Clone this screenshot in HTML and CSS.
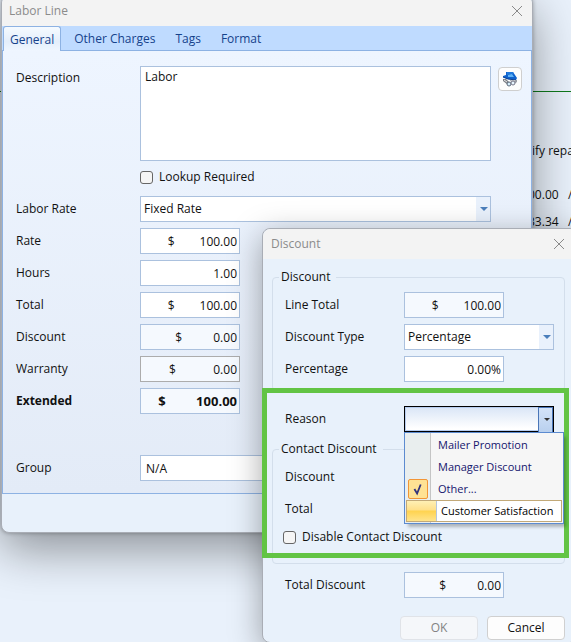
FILE: index.html
```html
<!DOCTYPE html>
<html lang="en">
<head>
    <meta charset="UTF-8">
    <meta name="viewport" content="width=device-width, initial-scale=1.0">
    <title>Labor Line</title>
    <link rel="stylesheet" href="styles.css">
</head>
<body>
    <main class="desktop">
        <section class="estimate">
            <p class="estimate-note">ify repa</p>
            <p class="estimate-amount">00.00 &nbsp; /</p>
            <p class="estimate-amount">33.34 &nbsp; /</p>
        </section>

        <section class="window labor-window">
            <header class="titlebar">
                <h1>Labor Line</h1>
                <button class="close" type="button" aria-label="Close">
                    <svg width="12" height="12" viewBox="0 0 12 12"><path d="M1 1L11 11M11 1L1 11"/></svg>
                </button>
            </header>
            <nav class="tabs">
                <a href="#" class="tab active">General</a>
                <a href="#" class="tab">Other Charges</a>
                <a href="#" class="tab">Tags</a>
                <a href="#" class="tab">Format</a>
            </nav>
            <form class="panel">
                <div class="row row-top">
                    <label for="description">Description</label>
                    <textarea id="description" class="field">Labor</textarea>
                    <button class="lookup" type="button" aria-label="Look up">
                        <svg width="16" height="16" viewBox="0 0 16 16">
                            <path d="M4 1L11 1L15 7L14 9L5 8L1 6L1 5L4 4Z" fill="#0f62cc"/>
                            <path d="M5 1L11 1L12 3L5 4Z" fill="#1f78dc"/>
                            <path d="M6 4L10 3L12 6L6 6Z" fill="#5fb2f5"/>
                            <path d="M1 6L6 8L14 9" stroke="#0b3f91" fill="none"/>
                            <path d="M1 8L4 8L8 12L6 14L1 10Z" fill="#7b7f86"/>
                            <path d="M8 9L15 9L15 11L12 13L9 11Z" fill="#9a9ea6"/>
                            <path d="M2 9L5 11M9 10L13 10" stroke="#e8e8e8"/>
                            <circle cx="7" cy="13" r="2" fill="#d5edfa" stroke="#5d6b7c"/>
                            <circle cx="11" cy="12" r="2" fill="#e7f6ff" stroke="#778"/>
                        </svg>
                    </button>
                </div>
                <div class="row row-check">
                    <label class="check"><input type="checkbox"> Lookup Required</label>
                </div>
                <div class="row">
                    <label for="labor-rate">Labor Rate</label>
                    <div class="select">
                        <select id="labor-rate" class="field"><option>Fixed Rate</option></select>
                    </div>
                </div>
                <div class="row">
                    <label for="rate">Rate</label>
                    <input id="rate" class="field amount" value="$&nbsp;&nbsp;&nbsp;&nbsp;&nbsp;&nbsp;&nbsp;&nbsp;100.00">
                </div>
                <div class="row">
                    <label for="hours">Hours</label>
                    <input id="hours" class="field amount" value="1.00">
                </div>
                <div class="row">
                    <label for="total">Total</label>
                    <input id="total" class="field amount" value="$&nbsp;&nbsp;&nbsp;&nbsp;&nbsp;&nbsp;&nbsp;&nbsp;100.00">
                </div>
                <div class="row">
                    <label for="discount">Discount</label>
                    <input id="discount" class="field amount" readonly value="$&nbsp;&nbsp;&nbsp;&nbsp;&nbsp;&nbsp;&nbsp;&nbsp;&nbsp;&nbsp;0.00">
                </div>
                <div class="row">
                    <label for="warranty">Warranty</label>
                    <input id="warranty" class="field amount muted" readonly value="$&nbsp;&nbsp;&nbsp;&nbsp;&nbsp;&nbsp;&nbsp;&nbsp;&nbsp;&nbsp;&nbsp;&nbsp;0.00">
                </div>
                <div class="row strong">
                    <label for="extended">Extended</label>
                    <input id="extended" class="field amount" readonly value="$&nbsp;&nbsp;&nbsp;&nbsp;&nbsp;&nbsp;&nbsp;&nbsp;&nbsp;100.00">
                </div>
                <div class="row row-group">
                    <label for="group">Group</label>
                    <input id="group" class="field" value="N/A">
                </div>
            </form>
            <footer class="statusbar"></footer>
        </section>

        <section class="window discount-window">
            <header class="titlebar">
                <h2>Discount</h2>
                <button class="close" type="button" aria-label="Close">
                    <svg width="12" height="12" viewBox="0 0 12 12"><path d="M1 1L11 11M11 1L1 11"/></svg>
                </button>
            </header>
            <form class="dialog">
                <fieldset class="first">
                    <legend>Discount</legend>
                    <div class="row">
                        <label for="line-total">Line Total</label>
                        <input id="line-total" class="field amount" readonly value="$&nbsp;&nbsp;&nbsp;&nbsp;&nbsp;&nbsp;&nbsp;&nbsp;100.00">
                    </div>
                    <div class="row">
                        <label for="discount-type">Discount Type</label>
                        <div class="select">
                            <select id="discount-type" class="field"><option>Percentage</option></select>
                        </div>
                    </div>
                    <div class="row">
                        <label for="percentage">Percentage</label>
                        <input id="percentage" class="field amount" value="0.00%">
                    </div>
                </fieldset>

                <div class="row outer">
                    <label for="reason">Reason</label>
                    <div class="select open">
                        <select id="reason" class="field"><option></option></select>
                        <ul class="menu">
                            <li><button type="button">Mailer Promotion</button></li>
                            <li><button type="button">Manager Discount</button></li>
                            <li class="checked"><button type="button">Other...</button>
                                <svg class="tick" width="20" height="20" viewBox="0 0 20 20"><path d="M6 10L9 15L13 5" /></svg>
                            </li>
                            <li class="hover"><button type="button">Customer Satisfaction</button></li>
                        </ul>
                    </div>
                </div>

                <fieldset class="contact">
                    <legend>Contact Discount</legend>
                    <p>Discount</p>
                    <p>Total</p>
                    <label class="check"><input type="checkbox"> Disable Contact Discount</label>
                </fieldset>

                <div class="row outer">
                    <label for="total-discount">Total Discount</label>
                    <input id="total-discount" class="field amount" readonly value="$&nbsp;&nbsp;&nbsp;&nbsp;&nbsp;&nbsp;&nbsp;&nbsp;&nbsp;&nbsp;0.00">
                </div>
                <div class="actions">
                    <button type="button" disabled>OK</button>
                    <button type="button">Cancel</button>
                </div>
            </form>
            <div class="highlight"></div>
        </section>
    </main>
</body>
</html>
```

FILE: styles.css
```css
* {
    margin: 0;
    padding: 0;
    box-sizing: border-box;
}

body {
    font-family: "Open Sans", "Noto Sans", sans-serif;
    font-size: 12px;
    line-height: 16px;
    color: #111;
}

input,
select,
textarea,
button {
    font: inherit;
    color: inherit;
}

.desktop {
    position: relative;
    min-height: 100vh;
    overflow: hidden;
    background: #e9f1fb;
}

/* Estimate behind the windows */
.estimate {
    padding-top: 91px;
}

.estimate::before {
    content: "";
    display: block;
    height: 1px;
    margin-bottom: 51px;
    background: #0f7a1c;
}

.estimate p {
    margin-left: calc(100% - 39px);
    white-space: nowrap;
}

.estimate .estimate-note {
    margin-bottom: 28px;
}

.estimate .estimate-amount {
    margin-left: calc(100% - 43px);
    margin-bottom: 11px;
}

/* Windows */
.window {
    position: absolute;
    background: #e8f1fb;
    border: 1px solid #a9adb5;
    border-radius: 8px;
    box-shadow: 0 16px 48px rgba(0, 0, 0, 0.4), 0 0 4px rgba(0, 0, 0, 0.3);
}

.labor-window {
    top: -5px;
    left: 1px;
    right: 38px;
}

.discount-window {
    top: 228px;
    left: 262px;
    right: -7px;
    box-shadow: 0 8px 32px rgba(0, 0, 0, 0.35);
}

.titlebar {
    display: flex;
    justify-content: space-between;
    align-items: center;
    height: 30px;
    padding: 0 9px 0 7px;
    background: #f3f3f3;
    border-radius: 8px 8px 0 0;
    color: #8b8b8b;
}

.discount-window .titlebar {
    padding: 0 12px 0 8px;
}

.titlebar h1,
.titlebar h2 {
    font-size: 12px;
    font-weight: normal;
}

.close {
    display: flex;
    background: none;
    border: none;
}

.close svg {
    fill: none;
    stroke: #8a8a8a;
}

.tabs {
    display: flex;
    align-items: flex-end;
    height: 25px;
    background: #bfdbff;
    border-bottom: 1px solid #8db2e3;
}

.tab {
    height: 21px;
    padding: 2px 10px;
    color: #15428b;
    text-decoration: none;
}

.tab.active {
    height: 25px;
    margin: 0 3px -1px 1px;
    padding: 5px 6px;
    background: linear-gradient(#f5faff, #e4eefb 60%, #eff6ff);
    border: 1px solid #8db2e3;
    border-bottom: none;
    border-radius: 3px 3px 0 0;
}

.panel {
    padding: 15px 9px 12px 13px;
    background: linear-gradient(#eef5ff, #e3ebf7);
    border: 1px solid #8db2e3;
    border-top: none;
}

.statusbar {
    height: 38px;
}

/* Form rows */
.row {
    display: flex;
    align-items: center;
    margin-bottom: 6px;
}

.row > label:first-child {
    flex: none;
    width: 124px;
}

.row-top {
    align-items: flex-start;
    gap: 7px;
    margin-bottom: 8px;
}

.row-top > label:first-child {
    width: 117px;
    padding-top: 4px;
}

.row.row-check {
    margin: 0 0 11px 124px;
}

.row-check > label.check:first-child {
    width: auto;
}

.field {
    width: 100%;
    height: 26px;
    padding: 0 3px;
    background: #fff;
    border: 1px solid #abc1de;
    border-radius: 0;
    outline: none;
}

textarea.field {
    flex: 1;
    height: 95px;
    padding: 2px 4px;
    resize: none;
}

.field[readonly] {
    background: #f5f9fe;
}

.field.muted {
    border-color: #acacac;
}

.amount {
    width: 100px;
    padding: 0 2px;
    text-align: right;
}

.strong {
    font-weight: bold;
}

.strong .amount {
    font-size: 13px;
}

.row-group {
    margin: 41px 31px 0 0;
}

.row-group .field {
    padding: 0 5px;
}

.panel .select {
    margin-right: 31px;
}

.lookup {
    display: flex;
    align-items: center;
    justify-content: center;
    width: 24px;
    height: 24px;
    margin-top: 1px;
    background: #fdfdfd;
    border: 1px solid #cfcfcf;
    border-radius: 4px;
}

.check {
    display: flex;
    align-items: center;
    gap: 6px;
}

.check input {
    width: 13px;
    height: 13px;
    appearance: none;
    background: #f5f5f5;
    border: 1px solid #666;
    border-radius: 3px;
}

/* Drop-downs */
.select {
    position: relative;
    flex: 1;
}

.select select {
    display: block;
    appearance: none;
    background: linear-gradient(90deg, #fff calc(100% - 14px), #e9f1fc calc(100% - 14px));
}

.select::after {
    content: "";
    position: absolute;
    top: 11px;
    right: 3px;
    border: 4px solid transparent;
    border-top-color: #4a7ebb;
    border-bottom: none;
}

.select.open select {
    border: 1px solid #000;
    background: linear-gradient(#d9e5f6, #fff 90%);
    box-shadow: inset 0 0 0 1px #b7cdf0;
}

.select.open::before {
    content: "";
    position: absolute;
    top: 1px;
    right: 1px;
    width: 13px;
    height: 24px;
    background: linear-gradient(#d3e3f8, #b9d0ee);
    border: 1px solid #4a76b8;
}

.select.open::after {
    top: 12px;
    right: 4px;
    border-width: 3px;
    border-bottom: none;
    border-top-color: #333;
}

.menu {
    position: absolute;
    z-index: 2;
    top: 26px;
    left: 0;
    right: -10px;
    padding: 1px;
    list-style: none;
    background: linear-gradient(90deg, #e9eeee 25px, #c5c5c5 25px, #c5c5c5 26px, #f6f6f6 26px);
    border: 1px solid #5c8bd0;
    box-shadow: 3px 4px 3px -1px rgba(0, 0, 0, 0.25);
    font-size: 11px;
    color: #15156e;
}

.menu li {
    position: relative;
    height: 22px;
}

.menu button {
    width: 100%;
    height: 22px;
    padding-left: 32px;
    background: none;
    border: none;
    text-align: left;
    white-space: nowrap;
}

.tick {
    position: absolute;
    top: 1px;
    left: 2px;
    fill: none;
    stroke: #35357c;
    stroke-width: 2;
    background: #ffe294;
    border: 1px solid #f29536;
    border-radius: 2px;
}

.menu .hover {
    background: linear-gradient(#fff0b5, #ffe08a 45%, #ffd34f 50%, #ffe48c);
    border: 1px solid #c2a978;
    padding-left: 29px;
    color: #000;
}

.menu .hover button {
    height: 20px;
    padding-left: 4px;
    background: #fff;
    border-left: 1px solid #b5c6de;
}

/* Discount dialog */
.dialog {
    padding: 10px 12px 2px 9px;
}

fieldset {
    border: 1px solid #d3deeb;
    border-radius: 4px;
    padding: 0 10px 0 12px;
}

legend {
    margin-left: -6px;
    padding: 0 6px 0 2px;
}

.dialog .row > label:first-child {
    width: 119px;
}

.first {
    height: 122px;
    padding-top: 7px;
}

.dialog .outer {
    margin: 15px 11px 9px 13px;
}

.contact {
    height: 123px;
    padding-top: 12px;
}

.contact p {
    margin-bottom: 16px;
}

.contact .check {
    margin: -4px 0 0 -2px;
}

.dialog .contact + .outer {
    margin-top: 8px;
    margin-bottom: 18px;
}

.actions {
    display: flex;
    justify-content: flex-end;
    gap: 9px;
}

.actions button {
    width: 78px;
    height: 24px;
    background: #fdfdfd;
    border: 1px solid #d0d0d0;
    border-radius: 4px;
}

.actions button:disabled {
    background: #f5f7fa;
    border-color: #e0e3e8;
    color: #838383;
}

/* Callout round the reason and contact discount */
.highlight {
    position: absolute;
    top: 159px;
    left: -1px;
    right: 8px;
    height: 170px;
    border: 5px solid #62c444;
    pointer-events: none;
}
```
